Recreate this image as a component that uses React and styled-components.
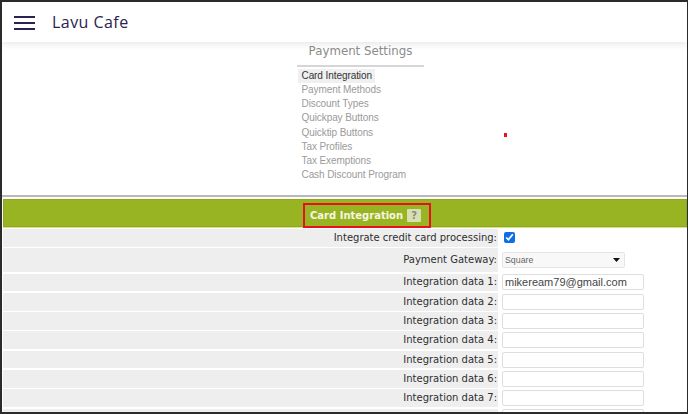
import React from "react";
import styled, { createGlobalStyle } from "styled-components";

const Global = createGlobalStyle`
  html, body { margin: 0; padding: 0; background: #fff; }
  * { box-sizing: border-box; }
`;
const Frame = styled.div`
  width: 688px; height: 414px; overflow: hidden; background: #fff;
  border-style: solid; border-color: #2b2b2b;
  border-width: 2px 1px 2px 2px;
  display: flex; flex-direction: column;
`;
const TopBar = styled.header`
  height: 40px; flex: none; display: flex; align-items: center;
  padding-left: 12px; gap: 17px; background: #fff;
  box-shadow: 0 2px 7px rgba(0,0,0,.10);
  position: relative;
`;
const Burger = styled.div`
  width: 21px; height: 14px; display: flex; flex-direction: column; justify-content: space-between;
  margin-top: 1px;
  span { display: block; height: 2px; background: #2b2250; }
`;
const Brand = styled.div`
  font: 500 16px "Open Sans", sans-serif; color: #2b2250; letter-spacing: .45px;
`;
const Nav = styled.nav`
  height: 153px; flex: none; display: flex; flex-direction: column; align-items: flex-start;
  padding-left: 295px; position: relative;
`;
const NavTitle = styled.div`
  width: 127px; height: 25px; border-bottom: 2px solid #d6d6d6; margin-bottom: 1.6px;
  font: 11.8px "DejaVu Sans", sans-serif; color: #8a8a8a; text-align: center; padding-top: 2px;
  white-space: nowrap;
`;
const NavItem = styled.div`
  height: 14.25px; margin-left: 1px; padding: 0 3px 0 3.5px;
  font: 10px/14.25px "Liberation Sans", sans-serif; letter-spacing: -.08px; white-space: nowrap;
  color: ${p => (p.$active ? "#333" : "#9a9a9a")};
  background: ${p => (p.$active ? "#f0f0f0" : "transparent")};
`;
const RedDot = styled.i`
  position: absolute; left: 501.5px; top: 91px; width: 3.5px; height: 3.5px; background: #f0101c;
`;
const Divider = styled.div`
  height: 2px; flex: none; background: #b9b9b9;
`;
const Section = styled.section`
  flex: none; padding: 2px 0 0 1px; display: flex; flex-direction: column;
`;
const GreenBar = styled.div`
  height: 28px; background: #99b423; border: 1px solid #8fa81e; box-shadow: 0 1px 0 #d5e08f;
  display: flex; justify-content: center; align-items: flex-end; margin-bottom: 2px;
`;
const Highlight = styled.div`
  width: 128px; height: 25px; border: 2px solid #e8101f; display: flex; align-items: center;
  justify-content: flex-start; gap: 0; padding-left: 5px; margin: 0 0 -2px 44px; position: relative;
  font: 700 10px "DejaVu Sans", sans-serif; color: #f4f6e2; white-space: nowrap;
`;
const Help = styled.span`
  width: 14px; height: 13px; margin-left: 4px; background: #d9dfb4; border-radius: 1px; color: #8a8a70;
  font: 700 10px/13px "DejaVu Sans", sans-serif; text-align: center;
`;
const Row = styled.div`
  display: grid; grid-template-columns: 495px 1fr; column-gap: 3px;
  height: ${p => p.$h}px; margin-bottom: 1.5px;
`;
const Label = styled.div`
  background: #eeeeee; font: 10px "DejaVu Sans", sans-serif; color: #2e2e2e;
  display: flex; align-items: center; justify-content: flex-end; padding: 0 1px 1px 0; white-space: nowrap;
`;
const Value = styled.div`
  display: flex; align-items: center; padding-left: 1px;
`;
const Check = styled.input`
  width: 11px; height: 11px; margin: 0 0 0 2px; accent-color: #0d6ee8;
`;
const FakeSelect = styled.div`
  width: 123px; height: 16px; background: #f8f8f8; border: 1px solid #e4e4e4; border-radius: 2px;
  font: 8.8px "Liberation Sans", sans-serif; color: #666; display: flex; align-items: center;
  justify-content: space-between; padding: 0 4px 0 2px;
`;
const Caret = styled.svg`
  width: 7px; height: 4px; fill: #111;
`;
const TextBox = styled.div`
  width: 142px; height: 16px; background: #fff; border: 1px solid #dedede; border-radius: 2px;
  font: 11px/15px "Liberation Sans", sans-serif; color: #444; padding-left: 2px; white-space: nowrap;
`;

const navItems = ["Payment Methods","Discount Types","Quickpay Buttons","Quicktip Buttons","Tax Profiles","Tax Exemptions","Cash Discount Program"];
const data = ["mikeream79@gmail.com","","","","","",""];

export default function App() {
  return (
    <Frame>
      <Global />
      <TopBar>
        <Burger><span /><span /><span /></Burger>
        <Brand>Lavu Cafe</Brand>
      </TopBar>
      <Nav>
        <NavTitle>Payment Settings</NavTitle>
        <NavItem $active>Card Integration</NavItem>
        {navItems.map(n => <NavItem key={n}>{n}</NavItem>)}
        <RedDot />
      </Nav>
      <Divider />
      <Section>
        <GreenBar>
          <Highlight>Card Integration<Help>?</Help></Highlight>
        </GreenBar>
        <Row $h={17.5}>
          <Label>Integrate credit card processing:</Label>
          <Value><Check type="checkbox" defaultChecked /></Value>
        </Row>
        <Row $h={24}>
          <Label>Payment Gateway:</Label>
          <Value>
            <FakeSelect>Square<Caret viewBox="0 0 7 4"><path d="M0 0h7L3.5 4z" /></Caret></FakeSelect>
          </Value>
        </Row>
        {data.map((d, i) => (
          <Row key={i} $h={17.8}>
            <Label>Integration data {i + 1}:</Label>
            <Value><TextBox>{d}</TextBox></Value>
          </Row>
        ))}
        <Row $h={17.8}>
          <Label>Integration data 8:</Label>
          <Value><TextBox /></Value>
        </Row>
      </Section>
    </Frame>
  );
}
